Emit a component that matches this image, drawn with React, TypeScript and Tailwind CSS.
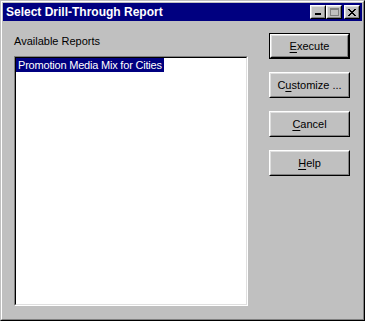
const font = { fontFamily: '"Liberation Sans", Arial, sans-serif' }

type BtnProps = { label: string; u: number; isDefault?: boolean }

const WinButton = ({ label, u, isDefault }: BtnProps) => {
  const inner = (
    <div className="h-full border border-t-white border-l-white border-r-black border-b-black">
      <div className="flex h-full items-center justify-center border border-t-[#dfdfdf] border-l-[#dfdfdf] border-r-[#808080] border-b-[#808080] bg-[#c0c0c0] text-[11px] text-black">
        <span>
          {label.slice(0, u)}
          <span className="underline underline-offset-2">{label[u]}</span>
          {label.slice(u + 1)}
        </span>
      </div>
    </div>
  )
  return isDefault ? (
    <div className="h-[26px] w-[81px] border border-black">{inner}</div>
  ) : (
    <div className="h-[26px] w-[81px]">{inner}</div>
  )
}

const TitleButton = ({ children }: { children: React.ReactNode }) => (
  <div className="h-[14px] w-[16px] border border-t-white border-l-white border-r-black border-b-black">
    <div className="relative flex h-full w-full items-center justify-center border border-t-[#dfdfdf] border-l-[#dfdfdf] border-r-[#808080] border-b-[#808080] bg-[#c0c0c0]">
      {children}
    </div>
  </div>
)

export default function App() {
  return (
    <div className="h-[321px] w-[365px] bg-[#c0c0c0]" style={font}>
      <div className="h-full w-full border border-t-[#c0c0c0] border-l-[#c0c0c0] border-r-black border-b-black">
        <div className="flex h-full w-full flex-col border border-t-white border-l-white border-r-[#808080] border-b-[#808080] p-px">
          <div className="flex h-[18px] items-center justify-between bg-[#000080] pl-[3px] pr-[2px]">
            <span className="text-[12px] font-bold text-white">Select Drill-Through Report</span>
            <div className="flex items-center">
              <TitleButton>
                <div className="absolute bottom-[2px] left-[3px] h-[2px] w-[6px] bg-black" />
              </TitleButton>
              <TitleButton>
                <div className="h-[8px] w-[9px] border border-t-2 border-[#808080]" />
              </TitleButton>
              <div className="w-[2px]" />
              <TitleButton>
                <svg width="8" height="7" viewBox="0 0 8 7" shapeRendering="crispEdges">
                  <path d="M0 0h2v1h-2zM6 0h2v1h-2zM1 1h2v1h-2zM5 1h2v1h-2zM2 2h4v1h-4zM3 3h2v1h-2zM2 4h4v1h-4zM1 5h2v1h-2zM5 5h2v1h-2zM0 6h2v1h-2zM6 6h2v1h-2z" fill="black" />
                </svg>
              </TitleButton>
            </div>
          </div>
          <div className="flex flex-1 pl-[11px] pr-[11px]">
            <div className="flex flex-col">
              <div className="mt-[13px] h-[14px] text-[11px] leading-[14px] text-black">Available Reports</div>
              <div className="mt-[8px] h-[250px] w-[234px] border border-t-[#808080] border-l-[#808080] border-r-white border-b-white">
                <div className="h-full w-full border border-t-black border-l-black border-r-[#dfdfdf] border-b-[#dfdfdf] bg-white">
                  <div className="w-fit bg-[#000080] px-[2px] text-[11px] leading-[14px] tracking-[-0.2px] text-white">
                    Promotion Media Mix for Cities
                  </div>
                </div>
              </div>
            </div>
            <div className="ml-auto mt-[12px] flex flex-col gap-[13px] pr-[1px]">
              <WinButton label="Execute" u={0} isDefault />
              <WinButton label="Customize ..." u={1} />
              <WinButton label="Cancel" u={0} />
              <WinButton label="Help" u={0} />
            </div>
          </div>
        </div>
      </div>
    </div>
  )
}
